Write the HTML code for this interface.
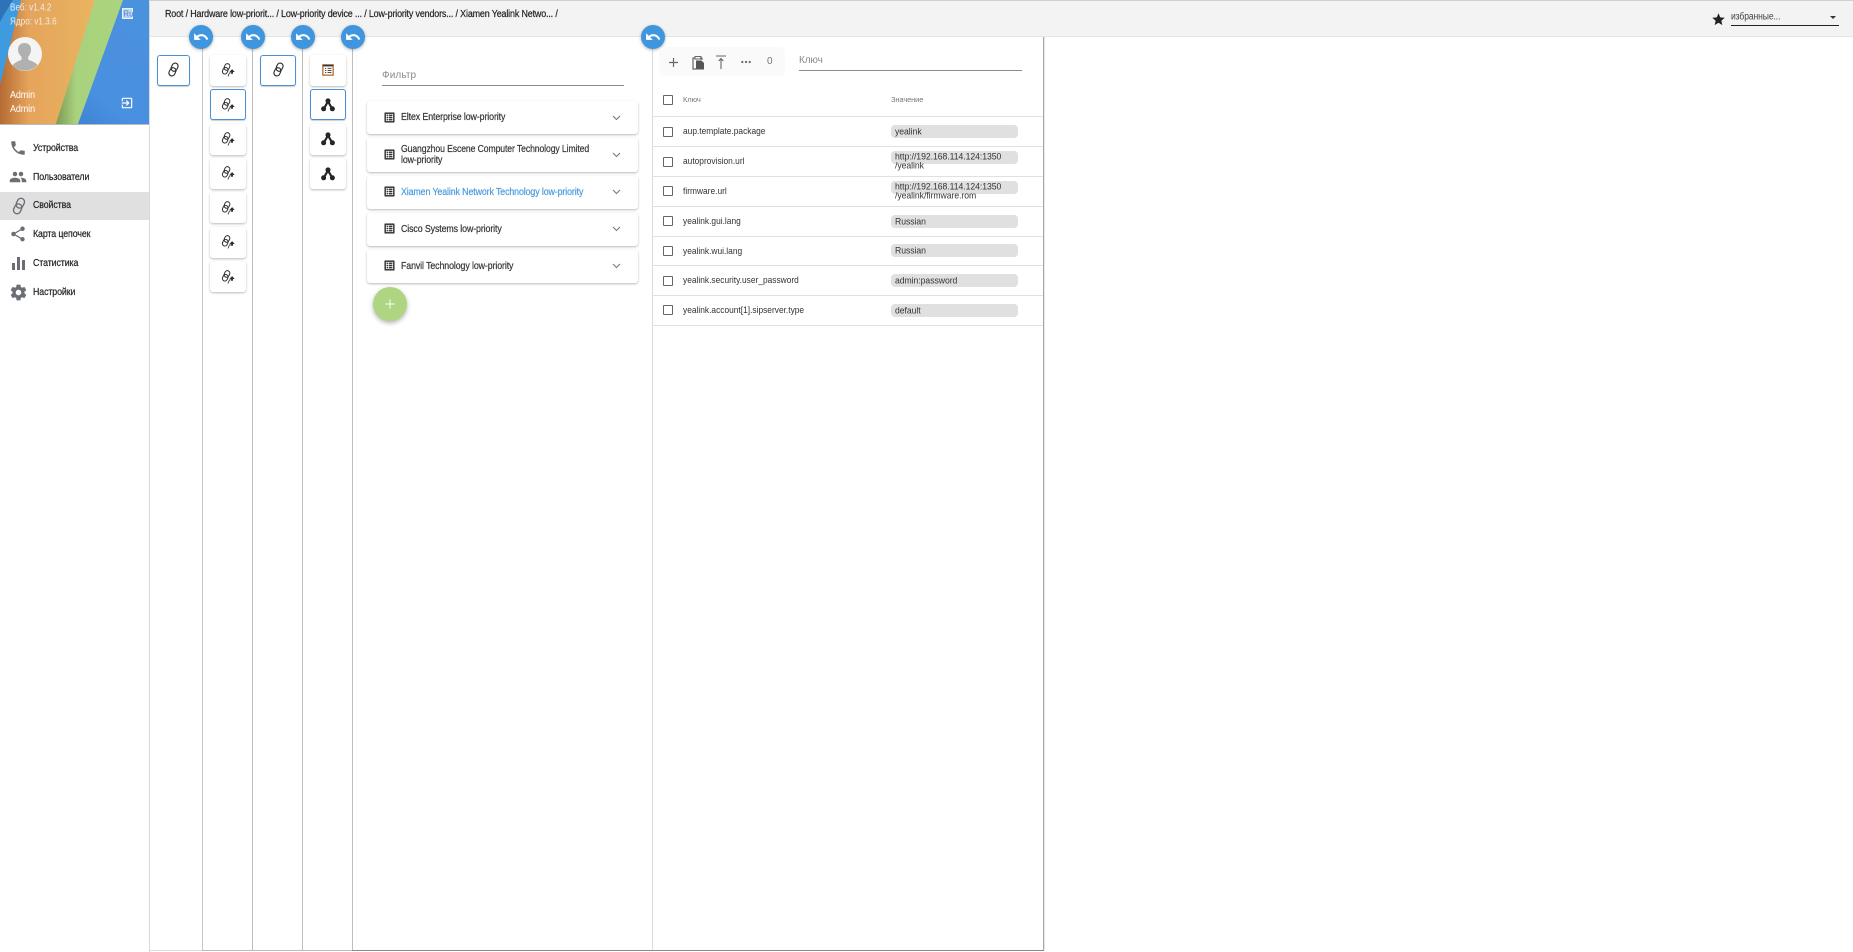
<!DOCTYPE html>
<html lang="ru"><head><meta charset="utf-8"><title>Свойства</title>
<style>
html,body{margin:0;padding:0;width:1853px;height:952px;overflow:hidden;background:#fff}
body{position:relative;font-family:"Liberation Sans","DejaVu Sans",sans-serif;color:#262626}
.a{position:absolute}
.t{position:absolute;white-space:nowrap;line-height:12px;font-size:10px;letter-spacing:-.12px;transform-origin:0 0;transform:translateY(1px) scaleX(.882)}
.p{transform:translateY(1px)}
.h{transform:none}
.m{-webkit-text-stroke:.2px currentColor}
.card{position:absolute;background:#fff;border-radius:3px;box-shadow:0 1px 2px rgba(0,0,0,.28);box-sizing:border-box}
.sel{border:1px solid #4a90d9;box-shadow:0 1px 1px rgba(0,0,0,.2)}
.ln{position:absolute;top:37px;width:1px;height:913px;background:#bdbdbd}
.undo{position:absolute;top:25px;width:24px;height:24px;border-radius:50%;background:#3f96de;box-shadow:0 1px 3px rgba(0,0,0,.3)}
.undo svg{position:absolute;left:4px;top:4px;width:16px;height:16px;fill:#fff;stroke:#fff;stroke-width:.7}
.row{position:absolute;left:653px;width:390px;height:1px;background:#e0e0e0}
.cb{position:absolute;left:663px;width:8px;height:8px;border:1.3px solid #666;border-radius:1px}
.pill{position:absolute;left:891px;width:127px;height:13px;background:#e0e0e0;border-radius:4px}
.pt{position:absolute;left:895px;font-size:9.5px;line-height:10px;white-space:nowrap;letter-spacing:-.05px;color:#333;transform-origin:0 0;transform:translateY(1.5px) scaleX(.91)}
.li{fill:#333;stroke:#333;stroke-width:.7}
svg{position:absolute;overflow:visible}
</style></head><body>
<svg width="0" height="0" style="position:absolute">
<defs>
<symbol id="undo" viewBox="0 0 24 24"><path d="M12.500 8c-2.650 0-5.050.99-6.900 2.600L2 7v9h9l-3.620-3.620c1.390-1.160 3.160-1.880 5.120-1.880 3.540 0 6.550 2.310 7.600 5.500l2.370-.78C21.080 11.030 17.150 8 12.500 8z"/></symbol>
<symbol id="list" viewBox="0 0 24 24"><path d="M19 5v14H5V5h14m1.100-2H3.900c-.5 0-.9.4-.9.9v16.200c0 .4.4.9.9.9h16.200c.4 0 .9-.5.9-.9V3.900c0-.5-.5-.9-.9-.9zM11 7h6v2h-6V7zm0 4h6v2h-6v-2zm0 4h6v2h-6zM7 7h2v2H7zm0 4h2v2H7zm0 4h2v2H7z"/></symbol>
<symbol id="chain" viewBox="0 0 24 24"><g fill="none" stroke="currentColor" stroke-width="1.800"><rect x="9" y="1.500" width="9.500" height="13.500" rx="4.700" transform="rotate(25 13.750 8.250)"/><rect x="5.500" y="9" width="9.500" height="13.500" rx="4.700" transform="rotate(25 10.250 15.750)"/></g></symbol>
<symbol id="chainarrow" viewBox="0 0 24 24"><g fill="none" stroke="#2b2b2b" stroke-width="1.700"><rect x="6" y="1" width="8.500" height="11.500" rx="4.200" transform="rotate(25 10.250 6.750)"/><rect x="3" y="7.500" width="8.500" height="11.500" rx="4.200" transform="rotate(25 7.250 13.250)"/><path d="M12 23 L14.500 17 H18.500" stroke-width="1.300"/></g><path d="M19 10.500l4.500 5h-3v3h-3v-3h-3z" fill="#2b2b2b"/></symbol>
<symbol id="graph" viewBox="0 0 24 24"><g fill="#262626"><circle cx="12" cy="5" r="4.300"/><circle cx="4.500" cy="18.500" r="4.300"/><circle cx="19.500" cy="18.500" r="4.300"/></g><path d="M12 6 5 18M12 6l7 12" stroke="#262626" stroke-width="3.800" fill="none"/></symbol>
</defs>
</svg>

<!-- top bar -->
<div class="a" style="left:0;top:0;width:1853px;height:37px;background:#f3f3f3;border-bottom:1px solid #e4e4e4;box-sizing:border-box"></div>
<div class="a" style="left:0;top:0;width:1853px;height:1px;background:#cfcfcf"></div>

<!-- sidebar -->
<div class="a" style="left:0;top:0;width:149px;height:952px;background:#fff;border-right:1px solid #d9d9d9"></div>
<svg style="left:0;top:0" width="149" height="124" viewBox="0 0 149 124">
<defs>
<linearGradient id="bl" x1="0" y1="1" x2="1" y2="0"><stop offset="0" stop-color="#2f72c6"/><stop offset=".45" stop-color="#4a90e0"/><stop offset="1" stop-color="#4a91de"/></linearGradient>
<linearGradient id="or" x1="0" y1="0" x2="1" y2="0"><stop offset="0" stop-color="#b56a32"/><stop offset=".3" stop-color="#e5a45c"/><stop offset="1" stop-color="#e8b55f"/></linearGradient>
<linearGradient id="gr" x1="0" y1="0" x2="1" y2="0"><stop offset="0" stop-color="#7b9a55"/><stop offset=".3" stop-color="#a9d27e"/><stop offset="1" stop-color="#abd47f"/></linearGradient>
</defs>
<rect width="149" height="124" fill="url(#bl)"/>
<path d="M0 0H22L0 85z" fill="#3f9be0"/>
<path d="M0 0H13L2 18 0 22z" fill="#2f72b8"/>
<path d="M21 0H96L56 124H0V85z" fill="url(#or)"/>
<path d="M95 0H123L78 124H56z" fill="url(#gr)"/>
</svg>
<div class="a" style="left:0;top:124px;width:149px;height:1px;background:#bbb"></div>
<div class="t" style="left:9.500px;top:1px;color:#e8eef5;letter-spacing:.05px;transform:translateY(1.500px) scaleX(.81)">Веб: v1.4.2</div>
<div class="t" style="left:9.500px;top:15px;color:#f3eee0;letter-spacing:.05px;transform:translateY(1.500px) scaleX(.81)">Ядро: v1.3.6</div>
<div class="t" style="left:9.500px;top:89px;color:#fff;transform:translateY(1px) scaleX(.9)">Admin</div>
<div class="t" style="left:9.500px;top:103px;color:#fff;transform:translateY(1px) scaleX(.9)">Admin</div>
<svg style="left:8px;top:37px" width="34" height="34" viewBox="0 0 34 34">
<circle cx="17" cy="17" r="17" fill="#f4f4f4"/>
<path d="M10 12.500C10 8 13 6 16.500 6S23 8 23 12.500c0 3-1.200 5.500-2.800 7.300v2.900c3 1.200 7 2.300 9.300 5.300A17 17 0 0 1 4.500 28.500c2.300-3.300 6.300-4.600 9-5.800v-2.900C11.700 18 10 15.500 10 12.500z" fill="#b0b0b0"/>
</svg>
<svg style="left:122px;top:8px" width="11" height="11" viewBox="0 0 11 11"><rect x=".5" y=".5" width="10" height="10" fill="#bcd6f3" stroke="#e8f0fa"/><text x="1.300" y="8.500" font-size="8" font-family="Liberation Sans" fill="#4a7fc0">Ru</text></svg>
<svg style="left:120px;top:96px;fill:#fff" width="14" height="14" viewBox="0 0 24 24"><path d="M10.090 15.590L11.500 17l5-5-5-5-1.410 1.410L12.670 11H3v2h9.670l-2.580 2.590zM19 3H5c-1.110 0-2 .9-2 2v4h2V5h14v14H5v-4H3v4c0 1.100.89 2 2 2h14c1.100 0 2-.9 2-2V5c0-1.100-.9-2-2-2z"/></svg>

<div class="a" style="left:0;top:192px;width:149px;height:28px;background:#e0e0e0"></div>
<svg style="left:9px;top:139px;fill:#6b6f75" width="18" height="18" viewBox="0 0 24 24"><path d="M6.620 10.790c1.440 2.830 3.760 5.140 6.590 6.590l2.200-2.200c.27-.27.67-.36 1.020-.24 1.120.37 2.330.57 3.570.57.55 0 1 .45 1 1V20c0 .55-.45 1-1 1-9.390 0-17-7.610-17-17 0-.55.45-1 1-1h3.500c.55 0 1 .45 1 1 0 1.250.2 2.450.57 3.570.11.35.03.74-.25 1.020l-2.200 2.200z"/></svg>
<svg style="left:9px;top:168px;fill:#6b6f75" width="18" height="18" viewBox="0 0 24 24"><path d="M16 11c1.660 0 2.990-1.340 2.990-3S17.660 5 16 5c-1.660 0-3 1.340-3 3s1.340 3 3 3zm-8 0c1.660 0 2.990-1.340 2.990-3S9.660 5 8 5C6.340 5 5 6.340 5 8s1.340 3 3 3zm0 2c-2.330 0-7 1.170-7 3.500V19h14v-2.500c0-2.330-4.670-3.500-7-3.500zm8 0c-.29 0-.62.02-.97.05 1.160.84 1.970 1.970 1.970 3.450V19h6v-2.500c0-2.330-4.670-3.500-7-3.500z"/></svg>
<svg style="left:10px;top:197px;color:#6b6f75" width="18" height="18"><use href="#chain"/></svg>
<svg style="left:9px;top:225px;fill:#6b6f75" width="18" height="18" viewBox="0 0 24 24"><path d="M18 16.080c-.76 0-1.440.3-1.960.77L8.910 12.700c.05-.23.09-.46.09-.7s-.04-.47-.09-.7l7.050-4.110c.54.5 1.250.81 2.040.81 1.660 0 3-1.340 3-3s-1.340-3-3-3-3 1.340-3 3c0 .24.04.47.09.7L8.040 9.810C7.500 9.310 6.790 9 6 9c-1.660 0-3 1.340-3 3s1.340 3 3 3c.79 0 1.500-.31 2.040-.81l7.120 4.160c-.05.21-.08.43-.08.65 0 1.610 1.310 2.920 2.920 2.920 1.610 0 2.920-1.310 2.920-2.920s-1.310-2.920-2.920-2.920z"/></svg>
<svg style="left:12px;top:257px;fill:#6b6f75" width="13" height="13" viewBox="0 0 13 13"><rect x="0" y="6" width="3" height="7"/><rect x="5" y="0" width="3" height="13"/><rect x="10" y="3" width="3" height="10"/></svg>
<svg style="left:9px;top:283px;fill:#6b6f75" width="19" height="19" viewBox="0 0 24 24"><path d="M19.430 12.980c.04-.32.07-.64.07-.98s-.03-.66-.07-.98l2.110-1.650c.19-.15.24-.42.12-.64l-2-3.460c-.12-.22-.39-.3-.61-.22l-2.490 1c-.52-.4-1.080-.73-1.690-.98l-.38-2.650C14.460 2.180 14.250 2 14 2h-4c-.25 0-.46.18-.49.42l-.38 2.650c-.61.25-1.170.59-1.690.98l-2.490-1c-.23-.09-.49 0-.61.22l-2 3.460c-.13.22-.07.49.12.64l2.110 1.650c-.04.32-.07.65-.07.98s.03.66.07.98l-2.110 1.650c-.19.15-.24.42-.12.64l2 3.460c.12.22.39.3.61.22l2.490-1c.52.4 1.080.73 1.690.98l.38 2.650c.03.24.24.42.49.42h4c.25 0 .46-.18.49-.42l.38-2.650c.61-.25 1.170-.59 1.690-.98l2.490 1c.23.09.49 0 .61-.22l2-3.460c.12-.22.07-.49-.12-.64l-2.110-1.650zM12 15.500c-1.930 0-3.500-1.570-3.500-3.500s1.570-3.500 3.500-3.500 3.500 1.570 3.500 3.500-1.570 3.500-3.500 3.500z"/></svg>
<div class="t m" style="left:32.500px;top:142px;color:#222">Устройства</div>
<div class="t m" style="left:32.500px;top:171px;color:#222">Пользователи</div>
<div class="t m" style="left:32.500px;top:199px;color:#222">Свойства</div>
<div class="t m" style="left:32.500px;top:228px;color:#222">Карта цепочек</div>
<div class="t m" style="left:32.500px;top:257px;color:#222">Статистика</div>
<div class="t m" style="left:32.500px;top:286px;color:#222">Настройки</div>

<!-- breadcrumb -->
<div class="t m" style="left:164.500px;top:8.500px;color:#222;letter-spacing:-.18px;transform:scaleX(.895)">Root / Hardware low-priorit... / Low-priority device ... / Low-priority vendors... / Xiamen Yealink Netwo... /</div>

<!-- favourites -->
<svg style="left:1711px;top:12px;fill:#222" width="15" height="15" viewBox="0 0 24 24"><path d="M12 17.270L18.180 21l-1.640-7.030L22 9.240l-7.190-.61L12 2 9.190 8.630 2 9.240l5.460 4.730L5.820 21z"/></svg>
<div class="t" style="left:1731px;top:11px;color:#444;transform:translateY(.5px) scaleX(.857)">избранные...</div>
<div class="a" style="left:1731px;top:25px;width:108px;height:1px;background:#222"></div>
<div class="a" style="left:1830px;top:16px;width:0;height:0;border-left:3px solid transparent;border-right:3px solid transparent;border-top:3px solid #333"></div>

<!-- column lines -->
<div class="ln" style="left:202px;background:#c8c8c8"></div>
<div class="ln" style="left:252px"></div>
<div class="ln" style="left:302px"></div>
<div class="ln" style="left:352px"></div>
<div class="ln" style="left:652px;background:#dcdcdc"></div>
<div class="a" style="left:1043px;top:37px;width:1px;height:913px;background:#a8a8a8"></div>
<div class="a" style="left:1044px;top:37px;width:1px;height:913px;background:#e8e8e8"></div>
<div class="a" style="left:150px;top:950px;width:52px;height:1px;background:#ddd"></div>
<div class="a" style="left:202px;top:950px;width:150px;height:1px;background:#bbb"></div>
<div class="a" style="left:352px;top:950px;width:692px;height:1px;background:#8a8a8a"></div>

<!-- undo buttons -->
<div class="undo" style="left:189px"><svg width="16" height="16"><use href="#undo"/></svg></div>
<div class="undo" style="left:241px"><svg width="16" height="16"><use href="#undo"/></svg></div>
<div class="undo" style="left:291px"><svg width="16" height="16"><use href="#undo"/></svg></div>
<div class="undo" style="left:341px"><svg width="16" height="16"><use href="#undo"/></svg></div>
<div class="undo" style="left:641px"><svg width="16" height="16"><use href="#undo"/></svg></div>

<!-- column 1 -->
<div class="card sel" style="left:157px;top:55px;width:33px;height:31px"></div>
<svg style="left:166px;top:62px;color:#2b2b2b" width="15" height="15"><use href="#chain"/></svg>

<!-- column 2 -->
<div class="card" style="left:210px;top:55px;width:36px;height:31px"></div>
<div class="card sel" style="left:210px;top:89px;width:36px;height:31px"></div>
<div class="card" style="left:210px;top:124px;width:36px;height:31px"></div>
<div class="card" style="left:210px;top:158px;width:36px;height:31px"></div>
<div class="card" style="left:210px;top:192px;width:36px;height:31px"></div>
<div class="card" style="left:210px;top:227px;width:36px;height:31px"></div>
<div class="card" style="left:210px;top:261px;width:36px;height:31px"></div>
<svg style="left:221px;top:63px" width="14" height="14"><use href="#chainarrow"/></svg>
<svg style="left:221px;top:98px" width="14" height="14"><use href="#chainarrow"/></svg>
<svg style="left:221px;top:132px" width="14" height="14"><use href="#chainarrow"/></svg>
<svg style="left:221px;top:166px" width="14" height="14"><use href="#chainarrow"/></svg>
<svg style="left:221px;top:201px" width="14" height="14"><use href="#chainarrow"/></svg>
<svg style="left:221px;top:235px" width="14" height="14"><use href="#chainarrow"/></svg>
<svg style="left:221px;top:270px" width="14" height="14"><use href="#chainarrow"/></svg>

<!-- column 3 -->
<div class="card sel" style="left:260px;top:55px;width:36px;height:31px"></div>
<svg style="left:271px;top:62px;color:#2b2b2b" width="15" height="15"><use href="#chain"/></svg>

<!-- column 4 -->
<div class="card" style="left:310px;top:55px;width:36px;height:31px"></div>
<div class="card sel" style="left:310px;top:89px;width:36px;height:31px"></div>
<div class="card" style="left:310px;top:124px;width:36px;height:31px"></div>
<div class="card" style="left:310px;top:158px;width:36px;height:31px"></div>
<svg style="left:322px;top:64px" width="12" height="12" viewBox="0 0 14 14"><rect x="1" y="1" width="12" height="12" fill="#fff" stroke="#b9692d" stroke-width="1.500"/><rect x="1" y="1" width="12" height="1.800" fill="#333"/><path d="M3.500 5h1.500M6.500 5H11M3.500 7.500h1.500M6.500 7.500H11M3.500 10h1.500M6.500 10H11" stroke="#333" stroke-width="1.100"/></svg>
<svg style="left:321px;top:98px" width="14" height="14"><use href="#graph"/></svg>
<svg style="left:321px;top:132px" width="14" height="14"><use href="#graph"/></svg>
<svg style="left:321px;top:167px" width="14" height="14"><use href="#graph"/></svg>

<!-- filter column -->
<div class="t p" style="left:382px;top:69px;color:#8a8a8a;letter-spacing:.1px">Фильтр</div>
<div class="a" style="left:382px;top:85px;width:242px;height:1px;background:#8c8c8c"></div>

<div class="card" style="left:367px;top:101px;width:271px;height:33px"></div>
<div class="card" style="left:367px;top:138px;width:271px;height:34px"></div>
<div class="card" style="left:367px;top:176px;width:271px;height:33px"></div>
<div class="card" style="left:367px;top:213px;width:271px;height:33px"></div>
<div class="card" style="left:367px;top:250px;width:271px;height:33px"></div>
<svg class="li" style="left:383px;top:111px" width="13" height="13"><use href="#list"/></svg>
<svg class="li" style="left:383px;top:148px" width="13" height="13"><use href="#list"/></svg>
<svg class="li" style="left:383px;top:185px" width="13" height="13"><use href="#list"/></svg>
<svg class="li" style="left:383px;top:222px" width="13" height="13"><use href="#list"/></svg>
<svg class="li" style="left:383px;top:259px" width="13" height="13"><use href="#list"/></svg>
<div class="t m" style="left:400.500px;top:111px;color:#333">Eltex Enterprise low-priority</div>
<div class="t m" style="left:400.500px;top:143px;color:#333;transform:translateY(1px) scaleX(.865)">Guangzhou Escene Computer Technology Limited</div>
<div class="t m" style="left:400.500px;top:154px;color:#333">low-priority</div>
<div class="t m" style="left:400.500px;top:186px;color:#4a9ae0">Xiamen Yealink Network Technology low-priority</div>
<div class="t m" style="left:400.500px;top:223px;color:#333">Cisco Systems low-priority</div>
<div class="t m" style="left:400.500px;top:260px;color:#333">Fanvil Technology low-priority</div>
<svg style="left:612px;top:115px" width="9" height="6"><path d="M1 1l3.500 3.500L8 1" fill="none" stroke="#777" stroke-width="1.100"/></svg>
<svg style="left:612px;top:152px" width="9" height="6"><path d="M1 1l3.500 3.500L8 1" fill="none" stroke="#777" stroke-width="1.100"/></svg>
<svg style="left:612px;top:189px" width="9" height="6"><path d="M1 1l3.500 3.500L8 1" fill="none" stroke="#777" stroke-width="1.100"/></svg>
<svg style="left:612px;top:226px" width="9" height="6"><path d="M1 1l3.500 3.500L8 1" fill="none" stroke="#777" stroke-width="1.100"/></svg>
<svg style="left:612px;top:263px" width="9" height="6"><path d="M1 1l3.500 3.500L8 1" fill="none" stroke="#777" stroke-width="1.100"/></svg>

<div class="a" style="left:373px;top:287px;width:34px;height:34px;border-radius:50%;background:#aed581;box-shadow:0 2px 5px rgba(0,0,0,.3)"></div>
<svg style="left:385px;top:299px" width="10" height="10"><path d="M5 .5v9M.5 5h9" stroke="#fff" stroke-width="1"/></svg>

<!-- key column -->
<div class="a" style="left:659px;top:47px;width:126px;height:29px;background:#fafafa;border-radius:6px"></div>
<svg style="left:669px;top:58px" width="9" height="9"><path d="M4.500 0v9M0 4.500h9" stroke="#666" stroke-width="1.200"/></svg>
<svg style="left:692px;top:55px" width="13" height="15" viewBox="0 0 13 15"><path d="M3 3H1v11h3" fill="none" stroke="#666" stroke-width="1.200"/><rect x="3" y="1.500" width="6" height="2.500" fill="none" stroke="#666"/><path d="M8 3h2v2" fill="none" stroke="#666"/><path d="M4 5.500h5.500L12 8v6.500H4z" fill="#555"/></svg>
<svg style="left:716px;top:55px" width="10" height="14"><path d="M0 1h10M5 14V3.500M2.700 6 5 3.500 7.300 6" fill="none" stroke="#666" stroke-width="1.100"/></svg>
<svg style="left:741px;top:60px" width="10" height="4"><circle cx="1.300" cy="2" r="1.100" fill="#666"/><circle cx="5" cy="2" r="1.100" fill="#666"/><circle cx="8.700" cy="2" r="1.100" fill="#666"/></svg>
<div class="t h" style="left:767px;top:56px;color:#777">0</div>
<div class="t p" style="left:799px;top:54px;color:#8a8a8a">Ключ</div>
<div class="a" style="left:799px;top:70px;width:223px;height:1px;background:#8c8c8c"></div>

<div class="cb" style="top:95px"></div>
<div class="t h" style="left:683px;top:94px;font-size:7.500px;color:#777">Ключ</div>
<div class="t h" style="left:891px;top:94px;font-size:7.500px;color:#777">Значение</div>

<div class="row" style="top:116px"></div>
<div class="row" style="top:146px"></div>
<div class="row" style="top:176px"></div>
<div class="row" style="top:206px"></div>
<div class="row" style="top:236px"></div>
<div class="row" style="top:265px"></div>
<div class="row" style="top:295px"></div>
<div class="row" style="top:325px"></div>

<div class="cb" style="top:127px"></div>
<div class="cb" style="top:157px"></div>
<div class="cb" style="top:186px"></div>
<div class="cb" style="top:216px"></div>
<div class="cb" style="top:246px"></div>
<div class="cb" style="top:276px"></div>
<div class="cb" style="top:305px"></div>

<div class="t" style="left:683px;top:125px;font-size:9.500px;color:#333;letter-spacing:0">aup.template.package</div>
<div class="t" style="left:683px;top:155px;font-size:9.500px;color:#333;letter-spacing:0">autoprovision.url</div>
<div class="t" style="left:683px;top:185px;font-size:9.500px;color:#333;letter-spacing:0">firmware.url</div>
<div class="t" style="left:683px;top:215px;font-size:9.500px;color:#333;letter-spacing:0">yealink.gui.lang</div>
<div class="t" style="left:683px;top:245px;font-size:9.500px;color:#333;letter-spacing:0">yealink.wui.lang</div>
<div class="t" style="left:683px;top:274px;font-size:9.500px;color:#333;letter-spacing:0">yealink.security.user_password</div>
<div class="t" style="left:683px;top:304px;font-size:9.500px;color:#333;letter-spacing:0">yealink.account[1].sipserver.type</div>

<div class="pill" style="top:125px"></div>
<div class="pill" style="top:151px"></div>
<div class="pill" style="top:181px"></div>
<div class="pill" style="top:215px"></div>
<div class="pill" style="top:244px"></div>
<div class="pill" style="top:274px"></div>
<div class="pill" style="top:304px"></div>
<div class="pt" style="top:126px">yealink</div>
<div class="pt" style="top:151px">http://192.168.114.124:1350</div>
<div class="pt" style="top:160px">/yealink</div>
<div class="pt" style="top:181px">http://192.168.114.124:1350</div>
<div class="pt" style="top:190px">/yealink/firmware.rom</div>
<div class="pt" style="top:215.500px">Russian</div>
<div class="pt" style="top:245px">Russian</div>
<div class="pt" style="top:275px">admin:password</div>
<div class="pt" style="top:304.500px">default</div>
</body></html>
